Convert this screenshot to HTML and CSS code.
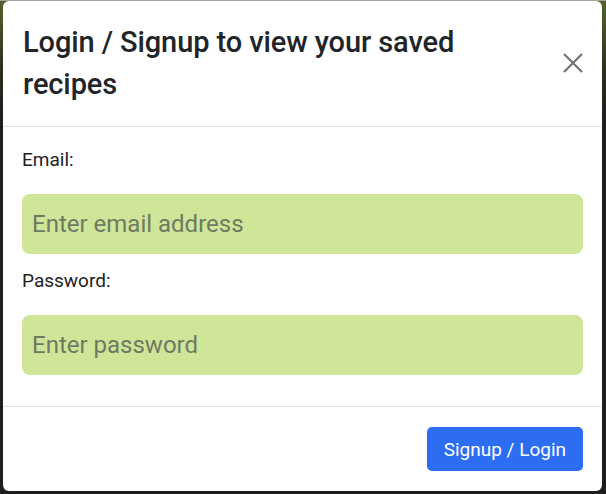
FILE: index.html
```html
<!DOCTYPE html>
<html lang="en">
<head>
<meta charset="utf-8">
<title>Login</title>
<link rel="stylesheet" href="styles.css">
</head>
<body>
<div class="modal">
  <div class="modal-header">
    <h4 class="modal-title">Login / Signup to view your saved recipes</h4>
    <button class="btn-close" type="button" aria-label="Close">
      <svg width="20" height="20" viewBox="0 0 20 20"><path d="M1 1L19 19M19 1L1 19" stroke="#6f6f6f" stroke-width="2" fill="none"/></svg>
    </button>
  </div>
  <div class="modal-body">
    <div class="field">
      <label class="form-label" for="email">Email:</label>
      <input class="form-control" id="email" type="email" placeholder="Enter email address">
    </div>
    <div class="field">
      <label class="form-label" for="pwd">Password:</label>
      <input class="form-control" id="pwd" type="password" placeholder="Enter password">
    </div>
  </div>
  <div class="modal-footer">
    <button class="btn-primary" type="button">Signup / Login</button>
  </div>
</div>
</body>
</html>
```

FILE: styles.css
```css
* { box-sizing: border-box; }
html, body { height: 100%; }
body {
  margin: 0;
  padding: 1px 4px 3px 3px;
  background:
    linear-gradient(#a3a39a 0 1px, transparent 1px),
    linear-gradient(to bottom, #55652a 0, #2a2f1e 70px, #1e1e1e 120px);
  font-family: Roboto, "Liberation Sans", sans-serif;
  color: #212529;
}
.modal {
  background: #fff;
  border-radius: 6px;
  height: 490px;
  display: flex;
  flex-direction: column;
}
.modal-header {
  display: flex;
  align-items: center;
  padding: 20px 19px 21px 20px;
  border-bottom: 1px solid #e2e4e6;
}
.modal-title {
  margin: 0;
  max-width: 520px;
  font-size: 29px;
  font-weight: 500;
  letter-spacing: -0.1px;
  line-height: 42px;
  color: #212529;
}
.btn-close {
  margin-left: auto;
  padding: 0;
  border: 0;
  background: none;
  width: 20px;
  height: 20px;
  display: flex;
}
.modal-body {
  flex: 1;
  padding: 19px 19px 17px 19px;
}
.field { margin-bottom: 13px; }
.form-label {
  display: block;
  font-size: 19px;
  line-height: 28px;
  margin-bottom: 20px;
  color: #1f2225;
}
.form-control {
  display: block;
  width: 100%;
  height: 60px;
  border: 0;
  border-radius: 8px;
  background: #cfe598;
  padding: 0 10px;
  font-family: Roboto, "Liberation Sans", sans-serif;
  font-size: 24px;
  color: #212529;
  outline: none;
}
.form-control::placeholder { color: #6f7a62; opacity: 1; }
.modal-footer {
  display: flex;
  justify-content: flex-end;
  padding: 20px 19px 20px 19px;
  border-top: 1px solid #e2e4e6;
}
.btn-primary {
  height: 44px;
  padding: 0 17px;
  border: 0;
  border-radius: 5px;
  background: #2d6df1;
  color: #fff;
  font-family: Roboto, "Liberation Sans", sans-serif;
  font-size: 19px;
}
```
